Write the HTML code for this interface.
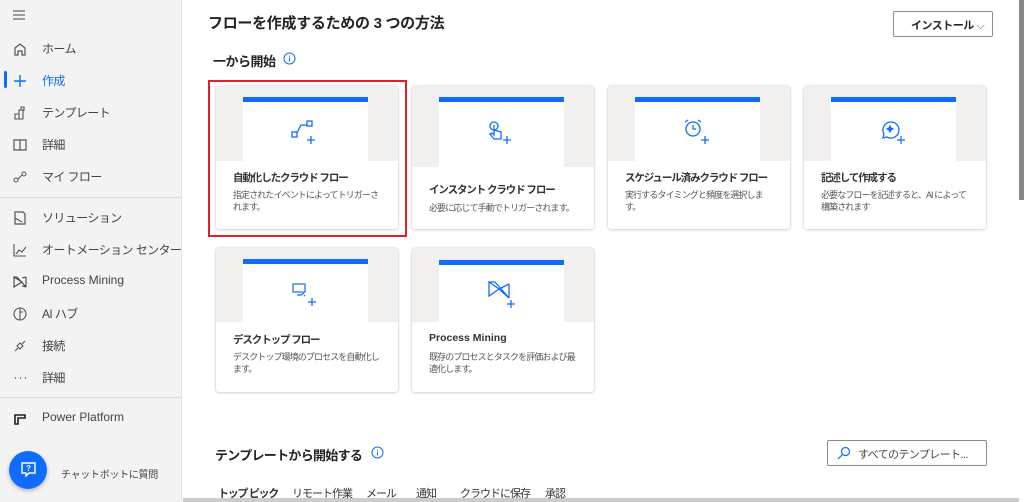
<!DOCTYPE html>
<html><head><meta charset="utf-8"><style>
*{margin:0;padding:0;box-sizing:border-box}
body{width:1024px;height:502px;overflow:hidden;background:#fff;font-family:"Liberation Sans","Noto Sans CJK JP",sans-serif;color:#242424;position:relative}
.side{position:absolute;left:0;top:0;width:182px;height:502px;background:#f3f3f3;border-right:1px solid #e0e0e0}
.it{position:absolute;left:0;width:182px;height:24px;font-size:12px;color:#444;white-space:nowrap;letter-spacing:-0.6px}
.it span{position:absolute;left:42px;top:3px}
.it svg{position:absolute;left:12px;top:4px}
.sep{position:absolute;left:0;width:182px;height:1px;background:#dcdcdc}
.abs{position:absolute}
.card{position:absolute;width:182px;background:#fff;border-radius:3px;box-shadow:0 0 2px rgba(0,0,0,.18),0 1px 3px rgba(0,0,0,.12)}
.card .top{position:absolute;left:0;top:0;width:182px;background:#f1f0ee;border-radius:3px 3px 0 0}
.card .pan{position:absolute;left:27px;width:125px;background:#fff;border-top:5px solid #0f6cff}
.card .t{position:absolute;left:17px;font-size:10.5px;font-weight:bold;color:#333;white-space:nowrap;letter-spacing:-1.1px}
.card .d{position:absolute;left:17px;width:152px;font-size:9px;line-height:12px;color:#555;letter-spacing:-0.9px}
.card svg{position:absolute}
.tab{position:absolute;top:485px;font-size:11px;color:#333;white-space:nowrap;letter-spacing:-1px}
</style></head><body>
<div class="side">
<svg class="abs" style="left:12px;top:9px" width="14" height="12"><path d="M1 2h12M1 6h12M1 10h12" stroke="#444" stroke-width="1"/></svg>
<div class="it" style="top:37px"><svg width="16" height="16"><path d="M3 14V7l5-4 5 4v7h-3v-4H6v4z" fill="none" stroke="#555" stroke-width="1.2"/></svg><span>ホーム</span></div>
<div class="abs" style="left:4px;top:71px;width:3px;height:17px;background:#0f6cff;border-radius:2px"></div>
<div class="it" style="top:69px"><svg width="16" height="16"><path d="M8 2v12M2 8h12" stroke="#0f6cff" stroke-width="1.4"/></svg><span style="color:#0f6cff">作成</span></div>
<div class="it" style="top:101px"><svg width="16" height="16"><path d="M3 9h4v5H3zM7 9V5h4v9H7M9 5V2h3v4" fill="none" stroke="#555" stroke-width="1.1"/></svg><span>テンプレート</span></div>
<div class="it" style="top:133px"><svg width="16" height="16"><path d="M2 3h12v10H2zM8 3v10" fill="none" stroke="#555" stroke-width="1.2"/></svg><span>詳細</span></div>
<div class="it" style="top:165px"><svg width="16" height="16"><circle cx="4" cy="11" r="2" fill="none" stroke="#555"/><circle cx="12" cy="5" r="2" fill="none" stroke="#555"/><path d="M6 10l4-4" stroke="#555"/></svg><span>マイ フロー</span></div>
<div class="sep" style="top:197px"></div>
<div class="it" style="top:206px"><svg width="16" height="16"><path d="M3 2h8l2 2v10H3zM3 8l7 4" fill="none" stroke="#555" stroke-width="1.2"/></svg><span>ソリューション</span></div>
<div class="it" style="top:238px"><svg width="16" height="16"><path d="M2 2v12h12M4 12l3-4 3 2 4-5" fill="none" stroke="#555" stroke-width="1.1"/></svg><span>オートメーション センター</span></div>
<div class="it" style="top:270px"><svg width="16" height="16"><path d="M2 3l8 5-8 5zM14 3v10M10 4l4-1M10 12l4 1M2 3h3l9 10" fill="none" stroke="#444" stroke-width="1.1"/></svg><span style="letter-spacing:0">Process Mining</span></div>
<div class="it" style="top:302px"><svg width="16" height="16"><path d="M8 2a6 6 0 1 0 0 12a6 6 0 1 0 0-12M8 2v12M8 6h3" fill="none" stroke="#555" stroke-width="1.1"/></svg><span>AI ハブ</span></div>
<div class="it" style="top:334px"><svg width="16" height="16"><path d="M3 13l3-3M10 6l3-3M5 8l3 3 3-3-3-3z" fill="none" stroke="#555" stroke-width="1.1"/></svg><span>接続</span></div>
<div class="it" style="top:366px"><svg width="16" height="16"><path d="M3 8h1M8 8h1M13 8h1" stroke="#555" stroke-width="1.6"/></svg><span>詳細</span></div>
<div class="sep" style="top:397px"></div>
<div class="it" style="top:407px"><svg width="16" height="16"><path d="M3 4h10v3H6v6H3zM6 7h6" fill="none" stroke="#222" stroke-width="1.6"/></svg><span style="letter-spacing:0">Power Platform</span></div>
<div class="abs" style="left:9px;top:451px;width:38px;height:38px;border-radius:50%;background:#0f6cff;box-shadow:0 2px 4px rgba(0,0,0,.25)"><svg class="abs" style="left:12px;top:11px" width="15" height="15"><path d="M1 1h13v10H8l-3 3v-3H1z" fill="none" stroke="#fff" stroke-width="1.4"/><text x="5" y="9" font-size="8" fill="#fff" font-weight="bold" font-family="Liberation Sans">?</text></svg></div>
<div class="abs" style="left:61px;top:466px;font-size:10px;color:#444;letter-spacing:-0.3px">チャットボットに質問</div>
</div>
<div class="abs" style="left:1019px;top:0;width:5px;height:200px;background:#888"></div>
<div class="abs" style="left:183px;top:498px;width:836px;height:4px;background:#ccc"></div>

<div class="abs" style="left:208px;top:12px;font-size:15px;font-weight:bold;letter-spacing:-0.3px">フローを作成するための 3 つの方法</div>
<div class="abs" style="left:893px;top:11px;width:100px;height:26px;border:1px solid #8a8a8a;border-radius:2px;font-size:11px;font-weight:bold;padding:5px 0 0 17px;letter-spacing:-0.5px">インストール <span style="font-weight:normal;color:#555">⌵</span></div>
<div class="abs" style="left:213px;top:51px;font-size:13px;font-weight:bold;letter-spacing:-0.5px">一から開始</div>
<svg class="abs" style="left:283px;top:52px" width="13" height="13"><circle cx="6.5" cy="6.5" r="5.5" fill="none" stroke="#0f6cff"/><path d="M6.5 5.5v4M6.5 3.5v1" stroke="#0f6cff"/></svg>

<div class="abs" style="left:208px;top:80px;width:199px;height:157px;border:2px solid #e0202a"></div>

<div class="card" style="left:216px;top:86px;height:143px"><div class="top" style="height:75px"></div><div class="pan" style="top:11px;height:64px"></div>
<svg style="left:75px;top:34px" width="30" height="30"><rect x="1" y="12" width="5" height="5" fill="none" stroke="#0f6cff" stroke-width="1.3"/><rect x="16" y="1" width="5" height="5" fill="none" stroke="#0f6cff" stroke-width="1.3"/><path d="M6 13l4-8h6M20 16v8M16 20h8" fill="none" stroke="#0f6cff" stroke-width="1.3"/></svg>
<div class="t" style="top:84px">自動化したクラウド フロー</div><div class="d" style="top:103px">指定されたイベントによってトリガーされます。</div></div>

<div class="card" style="left:412px;top:86px;height:143px"><div class="top" style="height:81px"></div><div class="pan" style="top:11px;height:70px"></div>
<svg style="left:75px;top:34px" width="30" height="30"><circle cx="7" cy="6" r="4" fill="none" stroke="#0f6cff" stroke-width="1.3"/><path d="M7 5v10l-2-2-2 1 4 5h7v-7l-7-2M20 16v8M16 20h8" fill="none" stroke="#0f6cff" stroke-width="1.3"/></svg>
<div class="t" style="top:96px">インスタント クラウド フロー</div><div class="d" style="top:116px">必要に応じて手動でトリガーされます。</div></div>

<div class="card" style="left:608px;top:86px;height:143px"><div class="top" style="height:75px"></div><div class="pan" style="top:11px;height:64px"></div>
<svg style="left:75px;top:32px" width="32" height="32"><circle cx="10" cy="11" r="7" fill="none" stroke="#0f6cff" stroke-width="1.3"/><path d="M10 7v4h3M2 4l3-2M18 4l-3-2M22 18v8M18 22h8" fill="none" stroke="#0f6cff" stroke-width="1.3"/></svg>
<div class="t" style="top:84px">スケジュール済みクラウド フロー</div><div class="d" style="top:103px">実行するタイミングと頻度を選択します。</div></div>

<div class="card" style="left:804px;top:86px;height:143px"><div class="top" style="height:75px"></div><div class="pan" style="top:11px;height:64px"></div>
<svg style="left:75px;top:32px" width="32" height="32"><path d="M4 20l1-4a8 8 0 1 1 3 3z" fill="none" stroke="#0f6cff" stroke-width="1.3"/><path d="M11 8l1 2 2 1-2 1-1 2-1-2-2-1 2-1zM22 18v8M18 22h8" fill="#0f6cff" stroke="#0f6cff" stroke-width="1.2"/></svg>
<div class="t" style="top:84px">記述して作成する</div><div class="d" style="top:103px">必要なフローを記述すると、AI によって構築されます</div></div>

<div class="card" style="left:216px;top:248px;height:144px"><div class="top" style="height:74px"></div><div class="pan" style="top:11px;height:63px"></div>
<svg style="left:76px;top:34px" width="30" height="30"><rect x="1" y="2" width="12" height="8" fill="none" stroke="#0f6cff" stroke-width="1.2"/><path d="M5 13h4l3-2M12 14l1-1M20 16v8M16 20h8" fill="none" stroke="#0f6cff" stroke-width="1.3"/></svg>
<div class="t" style="top:84px">デスクトップ フロー</div><div class="d" style="top:103px">デスクトップ環境のプロセスを自動化します。</div></div>

<div class="card" style="left:412px;top:248px;height:144px"><div class="top" style="height:74px"></div><div class="pan" style="top:12px;height:62px"></div>
<svg style="left:75px;top:32px" width="32" height="34"><path d="M2 2l10 7-10 7zM22 4v14M12 9l10-5M12 9l10 9M2 2h6l14 16" fill="none" stroke="#0f6cff" stroke-width="1.3"/><path d="M24 20v8M20 24h8" stroke="#0f6cff" stroke-width="1.3"/></svg>
<div class="t" style="top:84px;letter-spacing:0">Process Mining</div><div class="d" style="top:103px">既存のプロセスとタスクを評価および最適化します。</div></div>

<div class="abs" style="left:215px;top:445px;font-size:13px;font-weight:bold;letter-spacing:-0.7px">テンプレートから開始する</div>
<svg class="abs" style="left:371px;top:446px" width="13" height="13"><circle cx="6.5" cy="6.5" r="5.5" fill="none" stroke="#0f6cff"/><path d="M6.5 5.5v4M6.5 3.5v1" stroke="#0f6cff"/></svg>
<div class="abs" style="left:827px;top:440px;width:160px;height:26px;border:1px solid #8a8a8a;border-radius:2px;font-size:11px;color:#444;padding:5px 0 0 30px;letter-spacing:-0.6px">すべてのテンプレート...</div>
<svg class="abs" style="left:837px;top:446px" width="14" height="14"><circle cx="8.5" cy="5.5" r="4" fill="none" stroke="#0f6cff" stroke-width="1.2"/><path d="M5.5 8.5L1 13" stroke="#0f6cff" stroke-width="1.2"/></svg>
<div class="tab" style="left:218px;font-weight:bold;letter-spacing:-1.3px">トップ ピック</div>
<div class="tab" style="left:292px">リモート作業</div>
<div class="tab" style="left:366px">メール</div>
<div class="tab" style="left:416px">通知</div>
<div class="tab" style="left:460px">クラウドに保存</div>
<div class="tab" style="left:545px">承認</div>
</body></html>
